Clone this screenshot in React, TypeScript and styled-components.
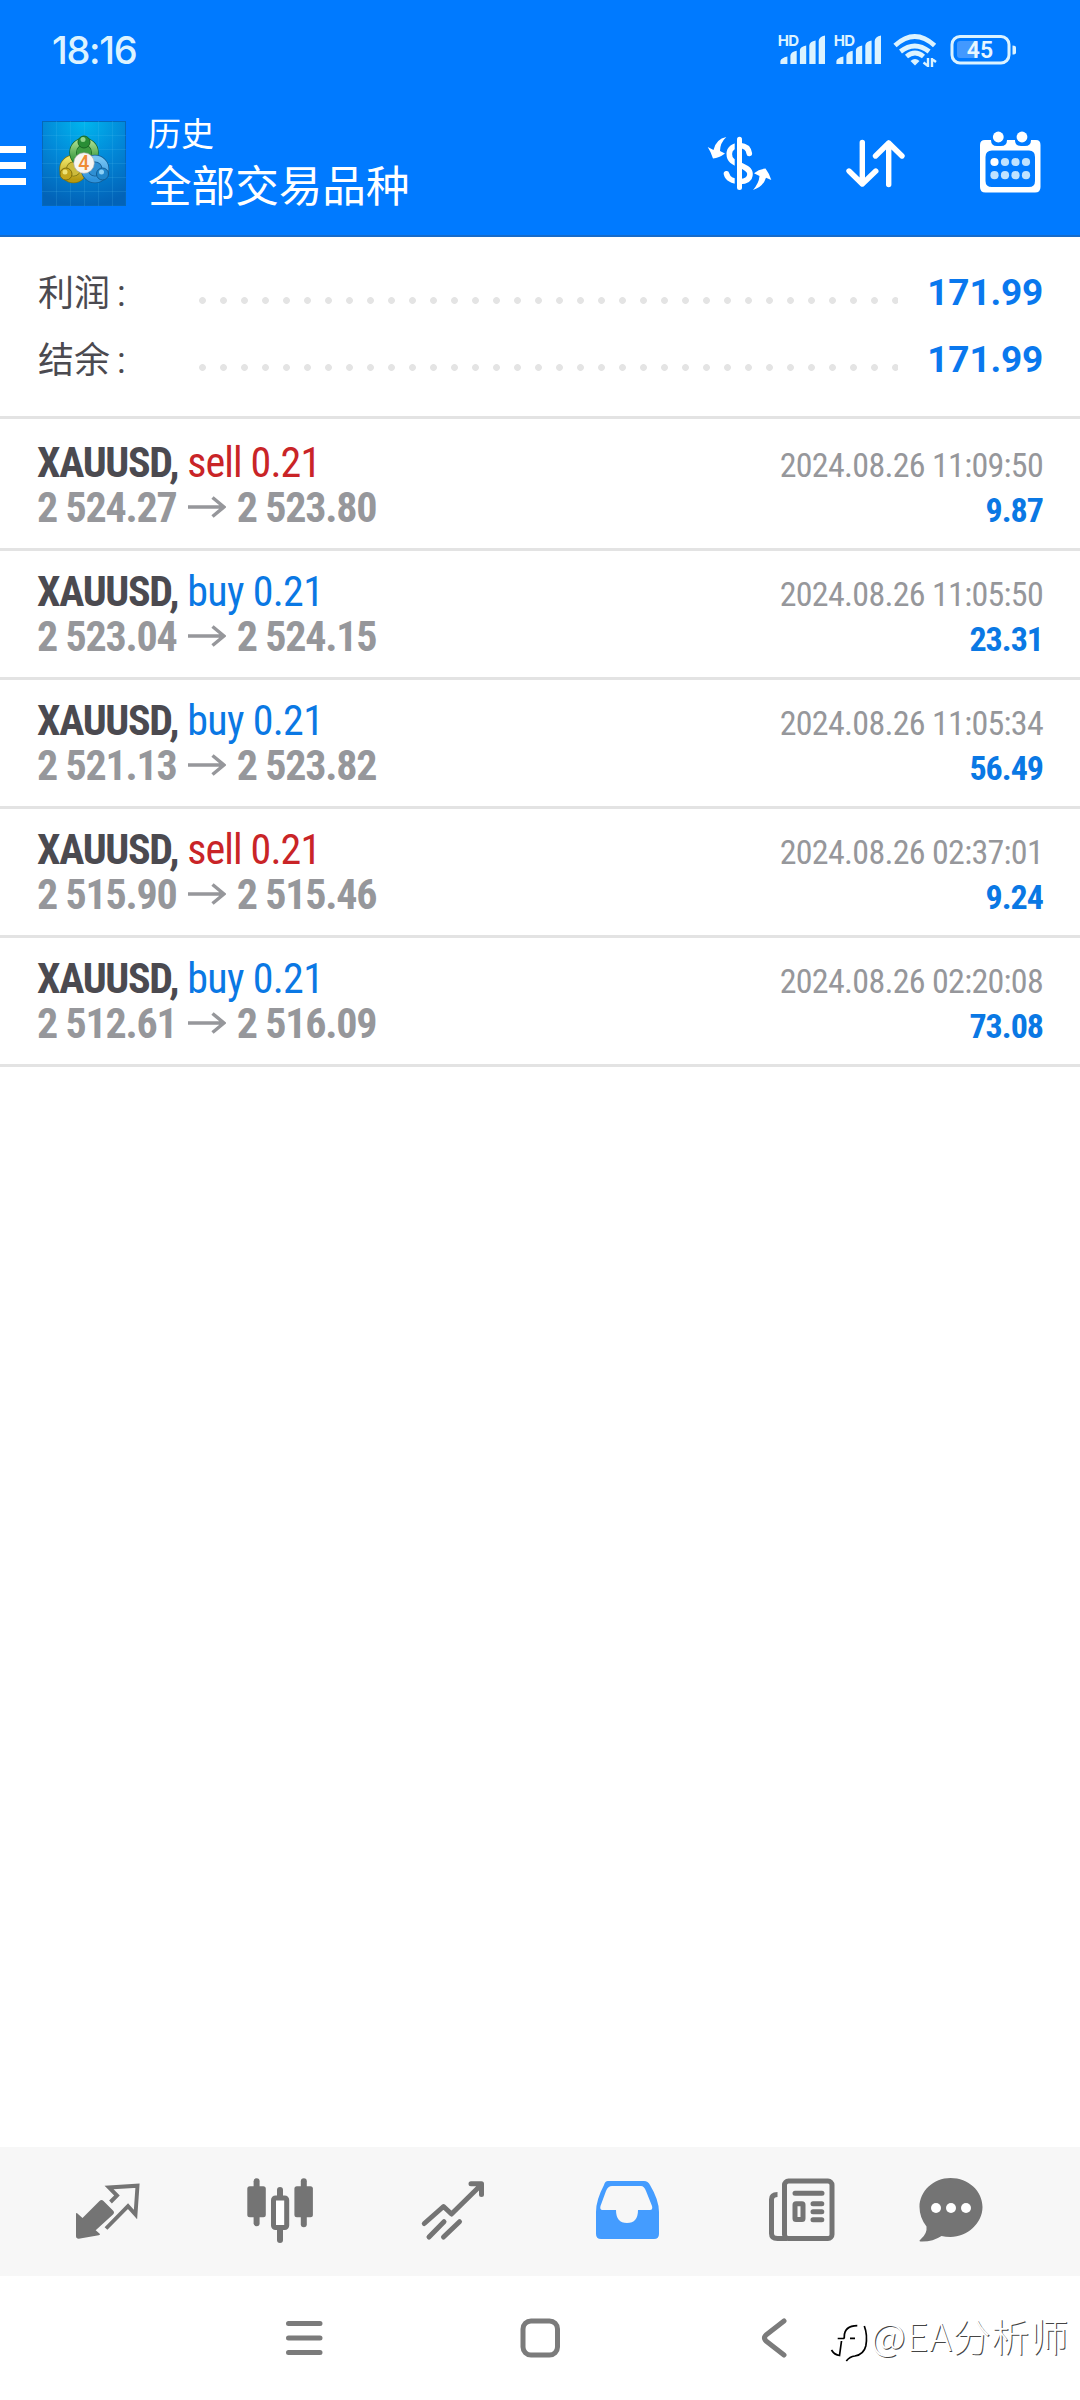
import React from 'react';
import styled, { createGlobalStyle } from 'styled-components';

const Global = createGlobalStyle`
  * { box-sizing: border-box; }
  body { margin: 0; background: #fff; }
`;

const cjk = `Roboto, "Noto Sans CJK SC", sans-serif`;

const Screen = styled.div`
  width: 1080px;
  height: 2400px;
  display: flex;
  flex-direction: column;
  background: #fff;
  font-family: ${cjk};
  overflow: hidden;
`;

const Header = styled.header`
  height: 237px;
  background: #007aff;
  border-bottom: 2px solid #176bc9;
  color: #fff;
`;

const StatusBar = styled.div`
  height: 100px;
  padding: 0 63px 0 52px;
  display: flex;
  align-items: center;
  color: #dcf3ff;
`;

const Clock = styled.span`
  font: 500 38px/40px Inter, sans-serif;
  letter-spacing: -1.3px;
  flex: 1;
`;

const StatusIcons = styled.svg`
  display: block;
  width: 240px;
  height: 40px;
`;

const Toolbar = styled.div`
  height: 135px;
  display: flex;
  align-items: center;
`;

const MenuIcon = styled.div`
  width: 26px;
  height: 39px;
  margin-top: -5px;
  display: flex;
  flex-direction: column;
  justify-content: space-between;
`;

const MenuBar = styled.span`
  height: 7px;
  background: #fff;
`;

const Logo = styled.svg`
  width: 84px;
  height: 85px;
  margin: -8px 0 0 16px;
`;

const Titles = styled.div`
  flex: 1;
  margin-left: 22px;
  margin-top: -5px;
`;

const Subtitle = styled.div`
  font-size: 33px;
  line-height: 46px;
`;

const Title = styled.div`
  font-size: 43.6px;
  line-height: 60px;
`;

const Actions = styled.svg`
  width: 372px;
  height: 70px;
  margin-top: -9px;
  overflow: visible;
`;

const Summary = styled.section`
  height: 182px;
  padding: 22px 37px 0 38px;
  border-bottom: 3px solid #e3e3e3;
`;

const SummaryRow = styled.div`
  height: 67px;
  display: flex;
  align-items: center;
`;

const SummaryLabel = styled.span`
  width: 161px;
  margin-top: -5px;
  font-size: 36px;
  word-spacing: -2px;
  color: #4b4a50;
`;

const Leader = styled.span`
  width: 699px;
  height: 7px;
  margin-top: 15px;
  background: radial-gradient(circle at 3.5px 3.5px, #e4e4e4 3px, transparent 3.8px) 0 0 / 21px 7px repeat-x;
`;

const SummaryValue = styled.span`
  flex: 1;
  text-align: right;
  font-size: 37px;
  font-weight: 700;
  letter-spacing: -0.2px;
  color: #0a78ee;
`;

const List = styled.main`
  flex: 1;
  padding-top: 3px;
`;

const Deal = styled.article`
  height: 129px;
  padding: 18px 37px 0 37px;
  display: flex;
  justify-content: space-between;
  border-bottom: 3px solid #e3e3e3;
  font-stretch: 75%;
`;

const DealColumn = styled.div<{ $right?: boolean }>`
  display: flex;
  flex-direction: column;
  align-items: ${p => (p.$right ? 'flex-end' : 'flex-start')};
  padding-top: ${p => (p.$right ? 3 : 0)}px;
`;

const DealName = styled.div`
  font-size: 42px;
  line-height: 45px;
  font-weight: 700;
  letter-spacing: -1.3px;
  color: #4b4a50;
  white-space: pre;
`;

const Side = styled.span<{ $sell: boolean }>`
  font-weight: 400;
  letter-spacing: ${p => (p.$sell ? -0.9 : -0.7)}px;
  margin-left: 0.7px;
  color: ${p => (p.$sell ? '#c92427' : '#0a78e4')};
`;

const Prices = styled.div`
  display: flex;
  align-items: center;
  font-size: 42px;
  line-height: 45px;
  font-weight: 700;
  letter-spacing: -1.2px;
  color: #96979b;
`;

const Arrow = styled.svg`
  width: 38px;
  height: 22px;
  margin: -2px 10.5px 0 11.5px;
`;

const DealTime = styled.div`
  font-size: 34px;
  line-height: 45px;
  letter-spacing: -0.7px;
  color: #96979b;
`;

const Profit = styled.div`
  font-size: 34px;
  line-height: 45px;
  font-weight: 700;
  letter-spacing: -1px;
  color: #0a78e4;
`;

const TabBar = styled.nav`
  height: 129px;
  background: #f7f7f7;
`;

const TabIcons = styled.svg`
  display: block;
  width: 1080px;
  height: 129px;
`;

const SystemBar = styled.footer`
  height: 124px;
  display: flex;
  position: relative;
`;

const SystemIcons = styled.svg`
  display: block;
  width: 800px;
  height: 124px;
`;

const Watermark = styled.div`
  position: absolute;
  left: 829px;
  top: 34px;
  display: flex;
  align-items: center;
  color: #fff;
  font: 300 38px/50px "Noto Sans CJK SC", sans-serif;
  letter-spacing: 0.9px;
  text-shadow: 1px 1px 0 #444;
  white-space: nowrap;
`;

const WatermarkText = styled.span`
  margin: -5px 0 0 -1px;
`;

const WatermarkLogo = styled.svg`
  width: 43px;
  height: 54px;
`;

const deals = [
  { side: 'sell', from: '2 524.27', to: '2 523.80', time: '2024.08.26 11:09:50', profit: '9.87' },
  { side: 'buy', from: '2 523.04', to: '2 524.15', time: '2024.08.26 11:05:50', profit: '23.31' },
  { side: 'buy', from: '2 521.13', to: '2 523.82', time: '2024.08.26 11:05:34', profit: '56.49' },
  { side: 'sell', from: '2 515.90', to: '2 515.46', time: '2024.08.26 02:37:01', profit: '9.24' },
  { side: 'buy', from: '2 512.61', to: '2 516.09', time: '2024.08.26 02:20:08', profit: '73.08' },
];

const Signal = ({ x }: { x: number }) => (
  <g transform={`translate(${x} 0)`} fill="#dcf3ff">
    <text x="-.5" y="15.700" fontSize="15" fontWeight="700" fontFamily="Inter, sans-serif" letterSpacing="-.6">HD</text>
    <path d="M2.200 34V31q.5-3 7-4.500V34zM12.200 34V25.500q.3-3.500 6.300-4.800V34zM21.700 34V20q.3-3.500 6.300-4.500V34zM31.100 34V15.500q.3-4 6.300-5V34zM40.500 34V11q.3-4.500 6.300-5.500V34z" />
  </g>
);

const StatusGlyphs = () => (
  <StatusIcons viewBox="0 0 240 40">
    <Signal x={1.2} />
    <Signal x={57.2} />
    <g fill="none" stroke="#dcf3ff" strokeWidth="4.800">
      <path d="M118 15.500q19.800-18 39.600 0" />
      <path d="M123.500 21.500q14.300-11 28.600 0" />
      <path d="M129.500 26.500q8.500-7 17 0" />
    </g>
    <path d="M133.500 31q4.500-4 9 0l-4.500 4.500z" fill="#dcf3ff" />
    <path d="M151 28v9M151 36l-4.500-3.500M155 37v-9M155 29l4 3" stroke="#dcf3ff" strokeWidth="2.400" fill="none" />
    <rect x="175" y="6.500" width="57" height="26.500" rx="8" fill="none" stroke="#dcf3ff" strokeWidth="3" />
    <rect x="180" y="11" width="21" height="17" rx="3" fill="#4299ff" />
    <path d="M235.500 15.500q3.500 0 3.500 2v5q0 2-3.500 2z" fill="#dcf3ff" />
    <text x="203" y="28" textAnchor="middle" fontSize="23" fontWeight="600" fill="#e8f7ff" fontFamily="Roboto, sans-serif">45</text>
  </StatusIcons>
);

const AppLogo = () => (
  <Logo viewBox="0 0 84 85">
    <defs>
      <radialGradient id="bg" cx=".5" cy="0" r="1">
        <stop offset="0" stopColor="#00b6ee" />
        <stop offset=".5" stopColor="#0288d8" />
        <stop offset="1" stopColor="#0263b8" />
      </radialGradient>
      <linearGradient id="gr" x2="0" y2="1"><stop stopColor="#a7dc8d" /><stop offset="1" stopColor="#238c2e" /></linearGradient>
      <linearGradient id="ye" x2="0" y2="1"><stop stopColor="#eee567" /><stop offset="1" stopColor="#b79a12" /></linearGradient>
      <linearGradient id="bl" x2="0" y2="1"><stop stopColor="#77c5f3" /><stop offset="1" stopColor="#2f93dc" /></linearGradient>
    </defs>
    <rect x=".5" y=".5" width="83" height="84" fill="url(#bg)" stroke="#0768b8" />
    <path d="M0 14.500H84M0 28.500H84M0 42.500H84M0 56.500H84M0 70.500H84M14.500 0V85M28.500 0V85M42.500 0V85M56.500 0V85M70.500 0V85" stroke="#5bc4f5" strokeOpacity=".16" />
    <g fill="none" strokeWidth="6">
      <circle cx="31.500" cy="48" r="10.500" stroke="#80760f" strokeWidth="7.500" fill="#cdbb3c" />
      <circle cx="31.500" cy="48" r="10.500" stroke="url(#ye)" />
      <circle cx="42" cy="31.500" r="11" stroke="#176725" strokeWidth="7.500" fill="#3f9d42" />
      <circle cx="42" cy="31.500" r="11" stroke="url(#gr)" />
      <circle cx="53" cy="48" r="10.500" stroke="#125b93" strokeWidth="7.500" fill="#2f8fd3" />
      <circle cx="53" cy="48" r="10.500" stroke="url(#bl)" />
    </g>
    <circle cx="42" cy="21" r="6" fill="#298d35" stroke="#176725" />
    <circle cx="41" cy="18.500" r="2.500" fill="#91d48b" />
    <circle cx="24" cy="53" r="6" fill="#c5a71d" stroke="#80700d" />
    <circle cx="23" cy="51" r="2.500" fill="#eee276" />
    <circle cx="60.500" cy="53" r="6" fill="#2187cc" stroke="#115c94" />
    <circle cx="59.500" cy="51" r="2.500" fill="#8bd0f6" />
    <circle cx="42" cy="42" r="10.300" fill="#f7f5f2" stroke="#aaa" strokeWidth=".6" />
    <text x="41.700" y="48.800" textAnchor="middle" fontSize="19.500" fontWeight="500" fontFamily="Roboto" fill="#ef8b34">4</text>
  </Logo>
);

const ActionGlyphs = () => (
  <Actions viewBox="708 128 372 70">
    <g fill="none" stroke="#fff" strokeLinecap="round" strokeLinejoin="round">
      <path d="M749.300 153.500C748.500 148 745 145.800 740 145.500C733 145.500 729.300 149 729.300 154C729.300 160 733 162 740 165C747 168 750 170 750 174C750 179 746 181.500 740 181.500C732 181.500 727.500 178 726.500 173.800" strokeWidth="5.600" />
      <path d="M736 138V189" stroke="#007aff" strokeWidth="2.600" />
      <path d="M739.500 139.300V187.500" strokeWidth="5" />
      <path d="M862.300 142.500V184M849 171l13.300 13 13.500-13M888.700 184.500V143M875.500 156l13.200-13 13.300 13" strokeWidth="5.400" />
    </g>
    <path d="M726.300 137Q716 139 713.500 150L707.700 147Q711 152 713 158.500Q719 158 725 153.500L720 151Q720 143 726.300 137zM753 190Q763 187 766 177.700L771.300 180Q769 173 765.500 168.500Q759 169 754 173.300L759.500 176Q759 183 753 190z" fill="#fff" />
    <path fillRule="evenodd" fill="#fff" d="M985 140h6q0 6 6 6h4q6 0 6-6h8q0 6 6 6h4q6 0 6-6h5q4.500 0 4.500 5v42q0 5.500-5.500 5.500h-49.500q-5.500 0-5.500-5.500V145q0-5 5-5zM992 150.500q-6.500 0-6.500 6.500v24q0 6 6.500 6h37q6 0 6-6v-24q0-6.500-6-6.500z" />
    <circle cx="998.300" cy="137" r="5.400" fill="#fff" /><circle cx="1022" cy="137" r="5.400" fill="#fff" />
    {[0, 1].map(r => [0, 1, 2, 3].map(c => (
      <circle key={`${r}${c}`} cx={994.5 + c * 10.5} cy={162 + r * 13.2} r="4.100" fill={r + c ? '#bfe2ff' : '#fff'} />
    )))}
  </Actions>
);

const TabGlyphs = () => (
  <TabIcons viewBox="0 2147 1080 129">
    <g fill="#747474">
      <path d="M76 2214q0-2 2 0l4.500 4 17-17q2-2 4 0l9.500 9.500q2 2 0 4L95.700 2230.300l4 3.500q1 1-1 1.500l-20 3.500q-2.700 0-2.700-2.700z" />
      <path d="M110.500 2202l6.500-6.500-8-8 28.500-1.800-2 28.800-7.500-8.300-22 22.300" fill="none" stroke="#747474" strokeWidth="3.900" />
      <rect x="247.300" y="2186.300" width="18.500" height="31" rx="2.500" /><rect x="253.600" y="2178.300" width="6" height="48" rx="3" />
      <rect x="294.400" y="2186.300" width="18.500" height="31" rx="2.500" /><rect x="300.800" y="2178.300" width="6" height="49" rx="3" />
      <rect x="277" y="2187" width="6" height="12" rx="3" /><rect x="277" y="2226" width="6" height="17" rx="3" />
      <rect x="273.500" y="2198" width="13.200" height="29.500" rx="2" fill="#fff" stroke="#747474" strokeWidth="5" />
    </g>
    <g fill="none" stroke="#747474" strokeWidth="5" strokeLinecap="round" strokeLinejoin="round">
      <path d="M424.300 2223.500l19.200-17 8 7.500 29.500-29M471 2183.700h10.500v10.800M429 2237l15-15.300M443.500 2237l16-15.300" />
    </g>
    <path fillRule="evenodd" fill="#449cff" d="M608 2181h36q4 0 6 4 9 15 9 27v22q0 5-5 5h-53q-5 0-5-5v-22q0-12 8-27 1-4 4-4zM612 2186q-4 0-6 5l-5.500 15q-1 4 2 4H616q0 13 11 13t11-13h12q3 0 2-4l-6-15q-2-5-5-5z" />
    <g fill="none" stroke="#747474" strokeWidth="5">
      <rect x="784.500" y="2181" width="47.500" height="57.500" rx="4" />
      <path d="M777.500 2194.500q-6 0-6 5v34q0 5 6 5h10" />
      <path d="M795 2193.300h27M813 2203.700h8.800M813 2211.700h8.800M813 2219.700h8.800" strokeLinecap="round" />
      <rect x="795" y="2203.700" width="8" height="15.800" rx="1" />
    </g>
    <path fill="#747474" d="M950.500 2178c18 0 32 13 32 29s-15 30-32 30q-5 0-9-1-9 6-21 5.500-2-.5 0-2 7-6 6-13-7-9-7-19.500c0-16 14-29 31-29z" />
    {[936, 951, 966].map(x => <circle key={x} cx={x} cy="2208" r="5" fill="#fff" />)}
  </TabIcons>
);

export default function App() {
  return (
    <Screen>
      <Global />
      <Header>
        <StatusBar>
          <Clock>18:16</Clock>
          <StatusGlyphs />
        </StatusBar>
        <Toolbar>
          <MenuIcon><MenuBar /><MenuBar /><MenuBar /></MenuIcon>
          <AppLogo />
          <Titles>
            <Subtitle>历史</Subtitle>
            <Title>全部交易品种</Title>
          </Titles>
          <ActionGlyphs />
        </Toolbar>
      </Header>
      <Summary>
        {['利润', '结余'].map(label => (
          <SummaryRow key={label}>
            <SummaryLabel>{label} :</SummaryLabel>
            <Leader />
            <SummaryValue>171.99</SummaryValue>
          </SummaryRow>
        ))}
      </Summary>
      <List>
        {deals.map(d => (
          <Deal key={d.time}>
            <DealColumn>
              <DealName>XAUUSD, <Side $sell={d.side === 'sell'}>{d.side} 0.21</Side></DealName>
              <Prices>
                {d.from}
                <Arrow viewBox="0 0 38 22"><path d="M0 11H36M24.500 1.500L36 11 24.500 20.500" fill="none" stroke="#96979b" strokeWidth="3.500" /></Arrow>
                {d.to}
              </Prices>
            </DealColumn>
            <DealColumn $right>
              <DealTime>{d.time}</DealTime>
              <Profit>{d.profit}</Profit>
            </DealColumn>
          </Deal>
        ))}
      </List>
      <TabBar><TabGlyphs /></TabBar>
      <SystemBar>
        <SystemIcons viewBox="0 2276 800 124">
          <g fill="none" stroke="#7b7b7b" strokeWidth="5" strokeLinecap="round" strokeLinejoin="round">
            <path d="M288.500 2323.500H320M288.500 2338H320M288.500 2352.500H320" />
            <rect x="523" y="2321" width="34.500" height="34" rx="8" />
            <path d="M784 2321l-18 14q-3 3 0 6l18 14" />
          </g>
        </SystemIcons>
        <Watermark>
          <WatermarkLogo viewBox="0 0 43 54">
            <path d="M2.500 40q3 5 8 5.500L12.500 31M8.700 28.500h5.300q1.500 0 1.300-2 0-10.500 13-10.800M21 28.300h5M35.300 16q3.500 9 1.500 20-2 8.500-11 10-5 .5-8.500 5" fill="none" stroke="#000" strokeWidth="1.700" />
          </WatermarkLogo>
          <WatermarkText>@EA分析师</WatermarkText>
        </Watermark>
      </SystemBar>
    </Screen>
  );
}
